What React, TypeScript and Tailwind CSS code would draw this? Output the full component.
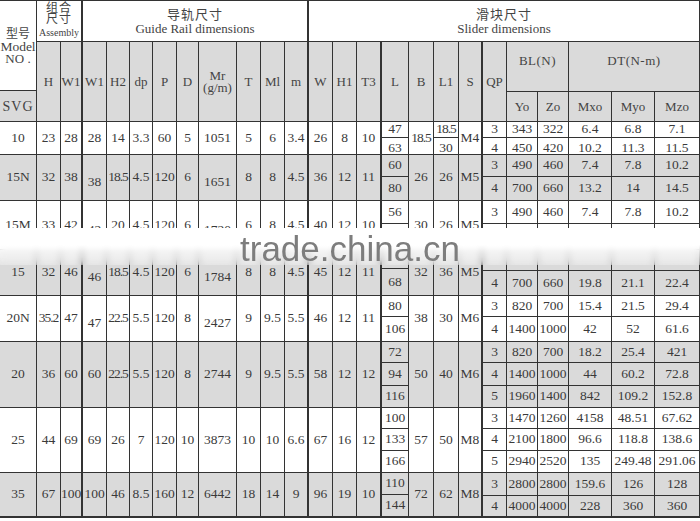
import React from 'react';

type Sub = { v: string; h?: string };
type QpRow = { v: string[]; h?: string };
type DataRow = {
  model: string;
  gray?: boolean;
  low?: boolean;
  h: string;
  rail: string[];
  mid: string[];
  L: Sub[];
  B: string;
  L1: Sub[];
  S: string;
  qp: QpRow[];
};

type Col = { w: string; thick?: boolean };

// H W1 | W1 H2 dp P D Mr T Ml m
const railCols: Col[] = [
  { w: 'w-[24px]' },
  { w: 'w-[22px]', thick: true },
  { w: 'w-[24px]' },
  { w: 'w-[23px]' },
  { w: 'w-[23px]' },
  { w: 'w-[24px]' },
  { w: 'w-[22px]' },
  { w: 'w-[38px]' },
  { w: 'w-[24px]' },
  { w: 'w-[24px]' },
  { w: 'w-[24px]', thick: true },
];
// W H1 T3
const midCols: Col[] = [{ w: 'w-[24px]' }, { w: 'w-[24px]' }, { w: 'w-[25px]', thick: true }];
// QP Yo Zo Mxo Myo Mzo
const qpCols: Col[] = [
  { w: 'w-[24px]' },
  { w: 'w-[31px]' },
  { w: 'w-[31px]' },
  { w: 'w-[43px]' },
  { w: 'w-[43px]' },
  { w: 'w-[45px]' },
];

const rows: DataRow[] = [
  {
    model: '10',
    h: 'h-[33px]',
    rail: ['23', '28', '28', '14', '3.3', '60', '5', '1051', '5', '6', '3.4'],
    mid: ['26', '8', '10'],
    L: [{ v: '47', h: 'h-[16px]' }, { v: '63' }],
    B: '18.5',
    L1: [{ v: '18.5', h: 'h-[16px]' }, { v: '30' }],
    S: 'M4',
    qp: [
      { v: ['3', '343', '322', '6.4', '6.8', '7.1'], h: 'h-[16px]' },
      { v: ['4', '450', '420', '10.2', '11.3', '11.5'] },
    ],
  },
  {
    model: '15N',
    gray: true,
    low: true,
    h: 'h-[46px]',
    rail: ['32', '38', '38', '18.5', '4.5', '120', '6', '1651', '8', '8', '4.5'],
    mid: ['36', '12', '11'],
    L: [{ v: '60', h: 'h-[22px]' }, { v: '80' }],
    B: '26',
    L1: [{ v: '26' }],
    S: 'M5',
    qp: [
      { v: ['3', '490', '460', '7.4', '7.8', '10.2'], h: 'h-[22px]' },
      { v: ['4', '700', '660', '13.2', '14', '14.5'] },
    ],
  },
  {
    model: '15M',
    low: true,
    h: 'h-[49px]',
    rail: ['33', '42', '42', '20', '4.5', '120', '6', '1720', '6', '8', '4.5'],
    mid: ['40', '12', '10'],
    L: [{ v: '56', h: 'h-[23px]' }, { v: '' }],
    B: '30',
    L1: [{ v: '26' }],
    S: 'M5',
    qp: [
      { v: ['3', '490', '460', '7.4', '7.8', '10.2'], h: 'h-[23px]' },
      { v: ['', '', '', '', '', ''] },
    ],
  },
  {
    model: '15',
    gray: true,
    low: true,
    h: 'h-[46px]',
    rail: ['32', '46', '46', '18.5', '4.5', '120', '6', '1784', '8', '8', '4.5'],
    mid: ['45', '12', '11'],
    L: [{ v: '', h: 'h-[19px]' }, { v: '68' }],
    B: '32',
    L1: [{ v: '36' }],
    S: 'M5',
    qp: [
      { v: ['', '', '', '', '', ''], h: 'h-[21px]' },
      { v: ['4', '700', '660', '19.8', '21.1', '22.4'] },
    ],
  },
  {
    model: '20N',
    low: true,
    h: 'h-[46px]',
    rail: ['35.2', '47', '47', '22.5', '5.5', '120', '8', '2427', '9', '9.5', '5.5'],
    mid: ['46', '12', '11'],
    L: [{ v: '80', h: 'h-[21px]' }, { v: '106' }],
    B: '38',
    L1: [{ v: '30' }],
    S: 'M6',
    qp: [
      { v: ['3', '820', '700', '15.4', '21.5', '29.4'], h: 'h-[21px]' },
      { v: ['4', '1400', '1000', '42', '52', '61.6'] },
    ],
  },
  {
    model: '20',
    gray: true,
    h: 'h-[66px]',
    rail: ['36', '60', '60', '22.5', '5.5', '120', '8', '2744', '9', '9.5', '5.5'],
    mid: ['58', '12', '12'],
    L: [{ v: '72', h: 'h-[21px]' }, { v: '94', h: 'h-[23px]' }, { v: '116' }],
    B: '50',
    L1: [{ v: '40' }],
    S: 'M6',
    qp: [
      { v: ['3', '820', '700', '18.2', '25.4', '421'], h: 'h-[21px]' },
      { v: ['4', '1400', '1000', '44', '60.2', '72.8'], h: 'h-[23px]' },
      { v: ['5', '1960', '1400', '842', '109.2', '152.8'] },
    ],
  },
  {
    model: '25',
    h: 'h-[65px]',
    rail: ['44', '69', '69', '26', '7', '120', '10', '3873', '10', '10', '6.6'],
    mid: ['67', '16', '12'],
    L: [{ v: '100', h: 'h-[21px]' }, { v: '133', h: 'h-[22px]' }, { v: '166' }],
    B: '57',
    L1: [{ v: '50' }],
    S: 'M8',
    qp: [
      { v: ['3', '1470', '1260', '4158', '48.51', '67.62'], h: 'h-[21px]' },
      { v: ['4', '2100', '1800', '96.6', '118.8', '138.6'], h: 'h-[22px]' },
      { v: ['5', '2940', '2520', '135', '249.48', '291.06'] },
    ],
  },
  {
    model: '35',
    gray: true,
    h: 'h-[45px]',
    rail: ['67', '100', '100', '46', '8.5', '160', '12', '6442', '18', '14', '9'],
    mid: ['96', '19', '10'],
    L: [{ v: '110', h: 'h-[22px]' }, { v: '144' }],
    B: '72',
    L1: [{ v: '62' }],
    S: 'M8',
    qp: [
      { v: ['3', '2800', '2800', '159.6', '126', '128'], h: 'h-[23px]' },
      { v: ['4', '4000', '4000', '228', '360', '360'] },
    ],
  },
];

// squeeze "18.5", "35.2" etc. into the narrow rail columns
const fit = (v: string) => (v.length >= 4 && v.includes('.') ? 'tracking-[-1px]' : '');

function Cell({
  w,
  thick,
  className = '',
  children,
}: {
  w: string;
  thick?: boolean;
  className?: string;
  children?: React.ReactNode;
}) {
  return (
    <div
      className={`${w} ${thick ? 'border-r-2' : 'border-r'} shrink-0 flex items-center justify-center whitespace-nowrap border-[#333] ${className}`}
    >
      {children}
    </div>
  );
}

function Stack({ items, w, thick }: { items: Sub[]; w: string; thick?: boolean }) {
  return (
    <div className={`${w} ${thick ? 'border-r-2' : 'border-r'} shrink-0 flex flex-col border-[#333]`}>
      {items.map((it, i) => (
        <div
          key={i}
          className={`${it.h ?? 'flex-1'} ${i < items.length - 1 ? 'border-b border-[#333]' : ''} flex items-center justify-center whitespace-nowrap ${fit(it.v)}`}
        >
          {it.v}
        </div>
      ))}
    </div>
  );
}

function Header() {
  const labels: [string, Col][] = [
    ['H', railCols[0]],
    ['W1', railCols[1]],
    ['W1', railCols[2]],
    ['H2', railCols[3]],
    ['dp', railCols[4]],
    ['P', railCols[5]],
    ['D', railCols[6]],
    ['Mr', railCols[7]],
    ['T', railCols[8]],
    ['Ml', railCols[9]],
    ['m', railCols[10]],
    ['W', midCols[0]],
    ['H1', midCols[1]],
    ['T3', midCols[2]],
    ['L', { w: 'w-[27px]' }],
    ['B', { w: 'w-[25px]' }],
    ['L1', { w: 'w-[25px]' }],
    ['S', { w: 'w-[24px]', thick: true }],
    ['QP', qpCols[0]],
  ];

  return (
    <div className="flex text-[#444]">
      {/* Model column */}
      <div className="w-[37px] shrink-0 flex flex-col border-r border-[#333]">
        <div className="h-[91px] border-t border-b border-[#333] flex flex-col items-center justify-center">
          <span className="text-[12px] leading-[14px]">型号</span>
          <span className="text-[13.5px] leading-[12px]">Model</span>
          <span className="text-[13px] leading-[12px]">NO .</span>
        </div>
        <div className="flex-1 bg-[#dadada] border-b border-[#333] flex items-center justify-center text-[14px] tracking-[1px]">
          SVG
        </div>
      </div>

      <div className="flex-1 flex flex-col">
        {/* group titles */}
        <div className="h-[42px] flex border-t border-b border-[#333]">
          <div className="w-[46px] shrink-0 border-r-2 border-[#333] flex flex-col items-center justify-center">
            <span className="text-[12px] leading-[11px] tracking-[1px]">组合</span>
            <span className="text-[12px] leading-[11px] tracking-[1px]">尺寸</span>
            <span className="text-[10px] leading-[12px] mt-[2px]">Assembly</span>
          </div>
          <div className="w-[226px] shrink-0 border-r-2 border-[#333] flex flex-col items-center justify-center pt-[2px]">
            <span className="text-[13px] leading-[14px] tracking-[1px]">导轨尺寸</span>
            <span className="text-[13px] leading-[14px]">Guide Rail dimensions</span>
          </div>
          <div className="flex-1 border-r border-[#333] flex flex-col items-center justify-center pt-[2px]">
            <span className="text-[13px] leading-[14px] tracking-[1px]">滑块尺寸</span>
            <span className="text-[13px] leading-[14px]">Slider dimensions</span>
          </div>
        </div>

        {/* column labels */}
        <div className="h-[80px] flex bg-[#dadada] border-b border-[#333] text-[13px]">
          {labels.map(([t, c], i) =>
            t === 'Mr' ? (
              <Cell key={i} w={c.w} thick={c.thick} className="flex-col leading-[12px]">
                <span>Mr</span>
                <span>(g/m)</span>
              </Cell>
            ) : (
              <Cell key={i} w={c.w} thick={c.thick}>
                {t}
              </Cell>
            )
          )}
          <div className="w-[62px] shrink-0 flex flex-col border-r border-[#333]">
            <div className="h-[50px] border-b border-[#333] flex items-center justify-center pb-3 tracking-[0.5px]">
              BL(N)
            </div>
            <div className="flex-1 flex">
              <Cell w={qpCols[1].w}>Yo</Cell>
              <div className="flex-1 flex items-center justify-center">Zo</div>
            </div>
          </div>
          <div className="w-[131px] shrink-0 flex flex-col border-r border-[#333]">
            <div className="h-[50px] border-b border-[#333] flex items-center justify-center pb-3 tracking-[0.5px]">
              DT(N-m)
            </div>
            <div className="flex-1 flex">
              <Cell w={qpCols[3].w}>Mxo</Cell>
              <Cell w={qpCols[4].w}>Myo</Cell>
              <div className="flex-1 flex items-center justify-center">Mzo</div>
            </div>
          </div>
        </div>
      </div>
    </div>
  );
}

function Row({ r, last }: { r: DataRow; last: boolean }) {
  return (
    <div
      className={`${r.h} flex ${last ? 'border-b-2' : 'border-b'} border-[#333] ${r.gray ? 'bg-[#dadada]' : 'bg-white'}`}
    >
      <Cell w="w-[37px]">{r.model}</Cell>
      {r.rail.map((v, i) => (
        <Cell
          key={i}
          w={railCols[i].w}
          thick={railCols[i].thick}
          className={`${fit(v)} ${r.low && (i === 2 || i === 7) ? 'pt-[10px]' : ''}`}
        >
          {v}
        </Cell>
      ))}
      {r.mid.map((v, i) => (
        <Cell key={i} w={midCols[i].w} thick={midCols[i].thick}>
          {v}
        </Cell>
      ))}
      <Stack items={r.L} w="w-[27px]" />
      <Cell w="w-[25px]" className={fit(r.B)}>
        {r.B}
      </Cell>
      <Stack items={r.L1} w="w-[25px]" />
      <Cell w="w-[24px]" thick>
        {r.S}
      </Cell>
      <div className="w-[217px] shrink-0 flex flex-col">
        {r.qp.map((q, i) => (
          <div
            key={i}
            className={`${q.h ?? 'flex-1'} flex ${i < r.qp.length - 1 ? 'border-b border-[#333]' : ''}`}
          >
            {q.v.map((v, j) => (
              <Cell key={j} w={qpCols[j].w}>
                {v}
              </Cell>
            ))}
          </div>
        ))}
      </div>
    </div>
  );
}

export default function App() {
  return (
    <div className="relative w-[700px] h-[521px] overflow-hidden bg-white font-['Liberation_Serif','Noto_Sans_CJK_SC',serif] text-[13.5px] text-[#3a3a3a]">
      <Header />
      {rows.map((r, i) => (
        <Row key={r.model} r={r} last={i === rows.length - 1} />
      ))}

      {/* watermark band */}
      <div className="absolute left-0 top-[228px] w-[700px] h-[37px] backdrop-blur-[3px] bg-linear-to-b from-white from-45% to-white/30" />
      <div className="absolute left-[240px] top-[234px] font-['Liberation_Sans',sans-serif] text-[35px] leading-[30px] text-[#7d7d7d]">
        trade.china.cn
      </div>
    </div>
  );
}
